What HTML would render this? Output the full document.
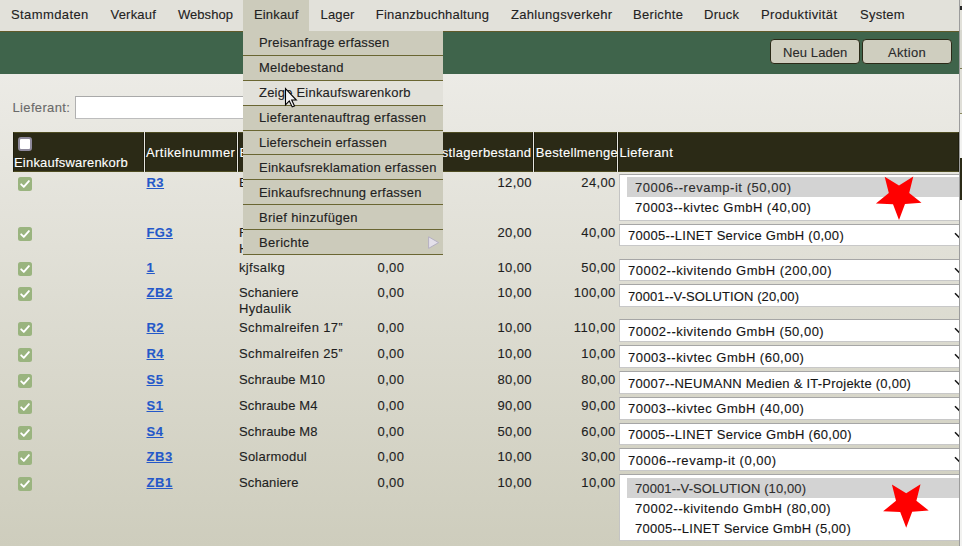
<!DOCTYPE html>
<html><head><meta charset="utf-8"><style>
html,body{margin:0;padding:0;}
body{width:962px;height:546px;overflow:hidden;position:relative;background:#e2e1da;font-family:"Liberation Sans",sans-serif;font-size:13px;}
body>div{position:absolute;}
body>div>svg{display:block;}
.t{position:absolute;white-space:nowrap;line-height:15px;font-size:13px;-webkit-text-stroke:0.12px currentColor;}
</style></head><body>
<div style="left:0px;top:74px;width:959px;height:472px;background:linear-gradient(#ecebe6,#cecdbd);"></div>
<div style="left:0px;top:0px;width:959px;height:31px;background:#e2e1da;"></div>
<div style="left:0px;top:31px;width:959px;height:1px;background:#605b2b;"></div>
<div style="left:0px;top:32px;width:959px;height:42px;background:#3f644b;"></div>
<div style="left:243px;top:0px;width:66px;height:31px;background:#cccbbb;"></div>
<span class="t" style="top:7.00px;color:#222222;letter-spacing:0.403px;left:11.00px;">Stammdaten</span>
<span class="t" style="top:7.00px;color:#222222;letter-spacing:0.205px;left:110.50px;">Verkauf</span>
<span class="t" style="top:7.00px;color:#222222;letter-spacing:0.042px;left:178.00px;">Webshop</span>
<span class="t" style="top:7.00px;color:#222222;letter-spacing:0.154px;left:254.00px;">Einkauf</span>
<span class="t" style="top:7.00px;color:#222222;letter-spacing:0.147px;left:320.50px;">Lager</span>
<span class="t" style="top:7.00px;color:#222222;letter-spacing:0.212px;left:375.75px;">Finanzbuchhaltung</span>
<span class="t" style="top:7.00px;color:#222222;letter-spacing:0.310px;left:511.00px;">Zahlungsverkehr</span>
<span class="t" style="top:7.00px;color:#222222;letter-spacing:0.311px;left:633.00px;">Berichte</span>
<span class="t" style="top:7.00px;color:#222222;letter-spacing:0.275px;left:704.00px;">Druck</span>
<span class="t" style="top:7.00px;color:#222222;letter-spacing:0.379px;left:761.00px;">Produktivität</span>
<span class="t" style="top:7.00px;color:#222222;letter-spacing:0.237px;left:860.00px;">System</span>
<div style="left:770px;top:39px;width:90px;height:25px;background:#cfcebf;border:1px solid #2b2a18;border-radius:4px;box-sizing:border-box;"></div>
<span class="t" style="top:45.20px;color:#2a2a2a;letter-spacing:0.092px;left:783.00px;">Neu Laden</span>
<div style="left:862px;top:39px;width:90px;height:25px;background:#cfcebf;border:1px solid #2b2a18;border-radius:4px;box-sizing:border-box;"></div>
<span class="t" style="top:45.20px;color:#2a2a2a;letter-spacing:0.333px;left:888.00px;">Aktion</span>
<span class="t" style="top:100.20px;color:#6a6a6a;letter-spacing:0.345px;left:12.50px;">Lieferant:</span>
<div style="left:75px;top:96px;width:300px;height:23px;background:#fff;border:1px solid #bdbdbd;border-top-color:#a9a9a9;border-left-color:#b0b0b0;box-sizing:border-box;"></div>
<div style="left:13px;top:132px;width:131px;height:40px;background:#2b2a16;border-top:1px solid #4e4c22;border-bottom:1px solid #4e4c22;border-left:1px solid #1f1e0e;border-right:1px solid #1f1e0e;box-sizing:border-box;"></div>
<div style="left:145px;top:132px;width:92px;height:40px;background:#2b2a16;border-top:1px solid #4e4c22;border-bottom:1px solid #4e4c22;border-left:1px solid #1f1e0e;border-right:1px solid #1f1e0e;box-sizing:border-box;"></div>
<div style="left:238px;top:132px;width:112px;height:40px;background:#2b2a16;border-top:1px solid #4e4c22;border-bottom:1px solid #4e4c22;border-left:1px solid #1f1e0e;border-right:1px solid #1f1e0e;box-sizing:border-box;"></div>
<div style="left:351px;top:132px;width:53px;height:40px;background:#2b2a16;border-top:1px solid #4e4c22;border-bottom:1px solid #4e4c22;border-left:1px solid #1f1e0e;border-right:1px solid #1f1e0e;box-sizing:border-box;"></div>
<div style="left:405px;top:132px;width:128px;height:40px;background:#2b2a16;border-top:1px solid #4e4c22;border-bottom:1px solid #4e4c22;border-left:1px solid #1f1e0e;border-right:1px solid #1f1e0e;box-sizing:border-box;"></div>
<div style="left:534px;top:132px;width:83px;height:40px;background:#2b2a16;border-top:1px solid #4e4c22;border-bottom:1px solid #4e4c22;border-left:1px solid #1f1e0e;border-right:1px solid #1f1e0e;box-sizing:border-box;"></div>
<div style="left:618px;top:132px;width:341px;height:40px;background:#2b2a16;border-top:1px solid #4e4c22;border-bottom:1px solid #4e4c22;border-left:1px solid #1f1e0e;border-right:1px solid #1f1e0e;box-sizing:border-box;"></div>
<div style="left:18px;top:137px;width:14px;height:14px;background:#fff;border:2px solid #8e8a9c;border-radius:3px;box-sizing:border-box;"></div>
<span class="t" style="top:154.50px;color:#ffffff;letter-spacing:0.199px;left:14.00px;">Einkaufswarenkorb</span>
<span class="t" style="top:144.70px;color:#ffffff;letter-spacing:0.425px;left:146.00px;">Artikelnummer</span>
<span class="t" style="top:144.70px;color:#ffffff;letter-spacing:0.201px;left:239.50px;">Beschreibung</span>
<span class="t" style="top:144.70px;color:#ffffff;letter-spacing:0.302px;left:404.83px;">Mindestlagerbestand</span>
<span class="t" style="top:144.70px;color:#ffffff;letter-spacing:0.294px;left:535.80px;">Bestellmenge</span>
<span class="t" style="top:144.70px;color:#ffffff;letter-spacing:0.335px;left:619.50px;">Lieferant</span>
<div style="left:18px;top:177px;width:14px;height:14px"><svg width="14" height="14" viewBox="0 0 14 14"><rect x="0" y="0" width="14" height="14" rx="2.5" fill="#9ab47f"/><path d="M3.2 7.3 L5.8 9.9 L10.9 4.1" fill="none" stroke="#fff" stroke-width="1.9" stroke-linecap="round" stroke-linejoin="round"/></svg></div>
<span class="t" style="top:174.50px;color:#2458c9;letter-spacing:0.477px;font-weight:bold;left:146.50px;text-decoration:underline;">R3</span>
<span class="t" style="top:174.50px;color:#1e1e1e;letter-spacing:-0.438px;left:239.00px;">B</span>
<span class="t" style="top:174.50px;color:#1e1e1e;letter-spacing:0.366px;left:497.52px;">12,00</span>
<span class="t" style="top:174.50px;color:#1e1e1e;letter-spacing:0.366px;left:581.33px;">24,00</span>
<div style="left:619px;top:174px;width:345px;height:47px;background:#fff;border-top:1px solid #a6a6a6;border-left:1px solid #c4c4c4;border-bottom:1px solid #c8c8c8;box-sizing:border-box;"></div>
<div style="left:627px;top:177px;width:340px;height:20px;background:#d3d3d3;"></div>
<span class="t" style="top:179.80px;color:#2e2e2e;letter-spacing:0.532px;left:635.00px;">70006--revamp-it (50,00)</span>
<span class="t" style="top:199.80px;color:#141414;letter-spacing:0.476px;left:635.00px;">70003--kivtec GmbH (40,00)</span>
<div style="left:18px;top:227px;width:14px;height:14px"><svg width="14" height="14" viewBox="0 0 14 14"><rect x="0" y="0" width="14" height="14" rx="2.5" fill="#9ab47f"/><path d="M3.2 7.3 L5.8 9.9 L10.9 4.1" fill="none" stroke="#fff" stroke-width="1.9" stroke-linecap="round" stroke-linejoin="round"/></svg></div>
<span class="t" style="top:224.50px;color:#2458c9;letter-spacing:0.370px;font-weight:bold;left:146.50px;text-decoration:underline;">FG3</span>
<span class="t" style="top:224.50px;color:#1e1e1e;letter-spacing:-1.031px;left:239.00px;">F</span>
<span class="t" style="top:240.50px;color:#1e1e1e;letter-spacing:-0.359px;left:239.00px;">H</span>
<span class="t" style="top:224.50px;color:#1e1e1e;letter-spacing:0.366px;left:497.52px;">20,00</span>
<span class="t" style="top:224.50px;color:#1e1e1e;letter-spacing:0.366px;left:581.33px;">40,00</span>
<div style="left:619px;top:224px;width:345px;height:22px;background:#fff;border-top:1px solid #a6a6a6;border-left:1px solid #c4c4c4;border-bottom:1px solid #c8c8c8;box-sizing:border-box;"></div>
<span class="t" style="top:228.30px;color:#141414;letter-spacing:0.277px;left:628.00px;">70005--LINET Service GmbH (0,00)</span>
<svg style="position:absolute;left:950px;top:224px" width="10" height="20"><path d="M5 9.3 L9.5 13.8" fill="none" stroke="#111" stroke-width="1.5"/></svg>
<div style="left:18px;top:262px;width:14px;height:14px"><svg width="14" height="14" viewBox="0 0 14 14"><rect x="0" y="0" width="14" height="14" rx="2.5" fill="#9ab47f"/><path d="M3.2 7.3 L5.8 9.9 L10.9 4.1" fill="none" stroke="#fff" stroke-width="1.9" stroke-linecap="round" stroke-linejoin="round"/></svg></div>
<span class="t" style="top:259.50px;color:#2458c9;letter-spacing:1.109px;font-weight:bold;left:146.50px;text-decoration:underline;">1</span>
<span class="t" style="top:259.50px;color:#1e1e1e;letter-spacing:0.332px;left:239.00px;">kjfsalkg</span>
<span class="t" style="top:259.50px;color:#1e1e1e;letter-spacing:0.355px;left:377.57px;">0,00</span>
<span class="t" style="top:259.50px;color:#1e1e1e;letter-spacing:0.366px;left:497.52px;">10,00</span>
<span class="t" style="top:259.50px;color:#1e1e1e;letter-spacing:0.366px;left:581.33px;">50,00</span>
<div style="left:619px;top:259px;width:345px;height:22px;background:#fff;border-top:1px solid #a6a6a6;border-left:1px solid #c4c4c4;border-bottom:1px solid #c8c8c8;box-sizing:border-box;"></div>
<span class="t" style="top:263.30px;color:#141414;letter-spacing:0.490px;left:628.00px;">70002--kivitendo GmbH (200,00)</span>
<svg style="position:absolute;left:950px;top:259px" width="10" height="20"><path d="M5 9.3 L9.5 13.8" fill="none" stroke="#111" stroke-width="1.5"/></svg>
<div style="left:18px;top:287px;width:14px;height:14px"><svg width="14" height="14" viewBox="0 0 14 14"><rect x="0" y="0" width="14" height="14" rx="2.5" fill="#9ab47f"/><path d="M3.2 7.3 L5.8 9.9 L10.9 4.1" fill="none" stroke="#fff" stroke-width="1.9" stroke-linecap="round" stroke-linejoin="round"/></svg></div>
<span class="t" style="top:284.50px;color:#2458c9;letter-spacing:0.542px;font-weight:bold;left:146.50px;text-decoration:underline;">ZB2</span>
<span class="t" style="top:284.50px;color:#1e1e1e;letter-spacing:0.113px;left:239.00px;">Schaniere</span>
<span class="t" style="top:300.50px;color:#1e1e1e;letter-spacing:0.309px;left:239.00px;">Hydaulik</span>
<span class="t" style="top:284.50px;color:#1e1e1e;letter-spacing:0.355px;left:377.57px;">0,00</span>
<span class="t" style="top:284.50px;color:#1e1e1e;letter-spacing:0.366px;left:497.52px;">10,00</span>
<span class="t" style="top:284.50px;color:#1e1e1e;letter-spacing:0.372px;left:573.68px;">100,00</span>
<div style="left:619px;top:284px;width:345px;height:23px;background:#fff;border-top:1px solid #a6a6a6;border-left:1px solid #c4c4c4;border-bottom:1px solid #c8c8c8;box-sizing:border-box;"></div>
<span class="t" style="top:289.10px;color:#141414;letter-spacing:0.111px;left:628.00px;">70001--V-SOLUTION (20,00)</span>
<svg style="position:absolute;left:950px;top:284px" width="10" height="20"><path d="M5 9.3 L9.5 13.8" fill="none" stroke="#111" stroke-width="1.5"/></svg>
<div style="left:18px;top:322px;width:14px;height:14px"><svg width="14" height="14" viewBox="0 0 14 14"><rect x="0" y="0" width="14" height="14" rx="2.5" fill="#9ab47f"/><path d="M3.2 7.3 L5.8 9.9 L10.9 4.1" fill="none" stroke="#fff" stroke-width="1.9" stroke-linecap="round" stroke-linejoin="round"/></svg></div>
<span class="t" style="top:319.50px;color:#2458c9;letter-spacing:0.477px;font-weight:bold;left:146.50px;text-decoration:underline;">R2</span>
<span class="t" style="top:319.50px;color:#1e1e1e;letter-spacing:0.364px;left:239.00px;">Schmalreifen 17‟</span>
<span class="t" style="top:319.50px;color:#1e1e1e;letter-spacing:0.355px;left:377.57px;">0,00</span>
<span class="t" style="top:319.50px;color:#1e1e1e;letter-spacing:0.366px;left:497.52px;">10,00</span>
<span class="t" style="top:319.50px;color:#1e1e1e;letter-spacing:0.534px;left:573.68px;">110,00</span>
<div style="left:619px;top:319px;width:345px;height:23px;background:#fff;border-top:1px solid #a6a6a6;border-left:1px solid #c4c4c4;border-bottom:1px solid #c8c8c8;box-sizing:border-box;"></div>
<span class="t" style="top:324.10px;color:#141414;letter-spacing:0.486px;left:628.00px;">70002--kivitendo GmbH (50,00)</span>
<svg style="position:absolute;left:950px;top:319px" width="10" height="20"><path d="M5 9.3 L9.5 13.8" fill="none" stroke="#111" stroke-width="1.5"/></svg>
<div style="left:18px;top:348px;width:14px;height:14px"><svg width="14" height="14" viewBox="0 0 14 14"><rect x="0" y="0" width="14" height="14" rx="2.5" fill="#9ab47f"/><path d="M3.2 7.3 L5.8 9.9 L10.9 4.1" fill="none" stroke="#fff" stroke-width="1.9" stroke-linecap="round" stroke-linejoin="round"/></svg></div>
<span class="t" style="top:345.50px;color:#2458c9;letter-spacing:0.477px;font-weight:bold;left:146.50px;text-decoration:underline;">R4</span>
<span class="t" style="top:345.50px;color:#1e1e1e;letter-spacing:0.364px;left:239.00px;">Schmalreifen 25‟</span>
<span class="t" style="top:345.50px;color:#1e1e1e;letter-spacing:0.355px;left:377.57px;">0,00</span>
<span class="t" style="top:345.50px;color:#1e1e1e;letter-spacing:0.366px;left:497.52px;">10,00</span>
<span class="t" style="top:345.50px;color:#1e1e1e;letter-spacing:0.366px;left:581.33px;">10,00</span>
<div style="left:619px;top:345px;width:345px;height:23px;background:#fff;border-top:1px solid #a6a6a6;border-left:1px solid #c4c4c4;border-bottom:1px solid #c8c8c8;box-sizing:border-box;"></div>
<span class="t" style="top:350.10px;color:#141414;letter-spacing:0.476px;left:628.00px;">70003--kivtec GmbH (60,00)</span>
<svg style="position:absolute;left:950px;top:345px" width="10" height="20"><path d="M5 9.3 L9.5 13.8" fill="none" stroke="#111" stroke-width="1.5"/></svg>
<div style="left:18px;top:374px;width:14px;height:14px"><svg width="14" height="14" viewBox="0 0 14 14"><rect x="0" y="0" width="14" height="14" rx="2.5" fill="#9ab47f"/><path d="M3.2 7.3 L5.8 9.9 L10.9 4.1" fill="none" stroke="#fff" stroke-width="1.9" stroke-linecap="round" stroke-linejoin="round"/></svg></div>
<span class="t" style="top:371.50px;color:#2458c9;letter-spacing:0.539px;font-weight:bold;left:146.50px;text-decoration:underline;">S5</span>
<span class="t" style="top:371.50px;color:#1e1e1e;letter-spacing:0.135px;left:239.00px;">Schraube M10</span>
<span class="t" style="top:371.50px;color:#1e1e1e;letter-spacing:0.355px;left:377.57px;">0,00</span>
<span class="t" style="top:371.50px;color:#1e1e1e;letter-spacing:0.366px;left:497.52px;">80,00</span>
<span class="t" style="top:371.50px;color:#1e1e1e;letter-spacing:0.366px;left:581.33px;">80,00</span>
<div style="left:619px;top:371px;width:345px;height:23px;background:#fff;border-top:1px solid #a6a6a6;border-left:1px solid #c4c4c4;border-bottom:1px solid #c8c8c8;box-sizing:border-box;"></div>
<span class="t" style="top:376.10px;color:#141414;letter-spacing:0.240px;left:628.00px;">70007--NEUMANN Medien &amp; IT-Projekte (0,00)</span>
<svg style="position:absolute;left:950px;top:371px" width="10" height="20"><path d="M5 9.3 L9.5 13.8" fill="none" stroke="#111" stroke-width="1.5"/></svg>
<div style="left:18px;top:400px;width:14px;height:14px"><svg width="14" height="14" viewBox="0 0 14 14"><rect x="0" y="0" width="14" height="14" rx="2.5" fill="#9ab47f"/><path d="M3.2 7.3 L5.8 9.9 L10.9 4.1" fill="none" stroke="#fff" stroke-width="1.9" stroke-linecap="round" stroke-linejoin="round"/></svg></div>
<span class="t" style="top:397.50px;color:#2458c9;letter-spacing:0.539px;font-weight:bold;left:146.50px;text-decoration:underline;">S1</span>
<span class="t" style="top:397.50px;color:#1e1e1e;letter-spacing:0.111px;left:239.00px;">Schraube M4</span>
<span class="t" style="top:397.50px;color:#1e1e1e;letter-spacing:0.355px;left:377.57px;">0,00</span>
<span class="t" style="top:397.50px;color:#1e1e1e;letter-spacing:0.366px;left:497.52px;">90,00</span>
<span class="t" style="top:397.50px;color:#1e1e1e;letter-spacing:0.366px;left:581.33px;">90,00</span>
<div style="left:619px;top:397px;width:345px;height:23px;background:#fff;border-top:1px solid #a6a6a6;border-left:1px solid #c4c4c4;border-bottom:1px solid #c8c8c8;box-sizing:border-box;"></div>
<span class="t" style="top:401.30px;color:#141414;letter-spacing:0.476px;left:628.00px;">70003--kivtec GmbH (40,00)</span>
<svg style="position:absolute;left:950px;top:397px" width="10" height="20"><path d="M5 9.3 L9.5 13.8" fill="none" stroke="#111" stroke-width="1.5"/></svg>
<div style="left:18px;top:426px;width:14px;height:14px"><svg width="14" height="14" viewBox="0 0 14 14"><rect x="0" y="0" width="14" height="14" rx="2.5" fill="#9ab47f"/><path d="M3.2 7.3 L5.8 9.9 L10.9 4.1" fill="none" stroke="#fff" stroke-width="1.9" stroke-linecap="round" stroke-linejoin="round"/></svg></div>
<span class="t" style="top:423.50px;color:#2458c9;letter-spacing:0.539px;font-weight:bold;left:146.50px;text-decoration:underline;">S4</span>
<span class="t" style="top:423.50px;color:#1e1e1e;letter-spacing:0.111px;left:239.00px;">Schraube M8</span>
<span class="t" style="top:423.50px;color:#1e1e1e;letter-spacing:0.355px;left:377.57px;">0,00</span>
<span class="t" style="top:423.50px;color:#1e1e1e;letter-spacing:0.366px;left:497.52px;">50,00</span>
<span class="t" style="top:423.50px;color:#1e1e1e;letter-spacing:0.366px;left:581.33px;">60,00</span>
<div style="left:619px;top:423px;width:345px;height:22px;background:#fff;border-top:1px solid #a6a6a6;border-left:1px solid #c4c4c4;border-bottom:1px solid #c8c8c8;box-sizing:border-box;"></div>
<span class="t" style="top:427.30px;color:#141414;letter-spacing:0.287px;left:628.00px;">70005--LINET Service GmbH (60,00)</span>
<svg style="position:absolute;left:950px;top:423px" width="10" height="20"><path d="M5 9.3 L9.5 13.8" fill="none" stroke="#111" stroke-width="1.5"/></svg>
<div style="left:18px;top:451px;width:14px;height:14px"><svg width="14" height="14" viewBox="0 0 14 14"><rect x="0" y="0" width="14" height="14" rx="2.5" fill="#9ab47f"/><path d="M3.2 7.3 L5.8 9.9 L10.9 4.1" fill="none" stroke="#fff" stroke-width="1.9" stroke-linecap="round" stroke-linejoin="round"/></svg></div>
<span class="t" style="top:448.50px;color:#2458c9;letter-spacing:0.542px;font-weight:bold;left:146.50px;text-decoration:underline;">ZB3</span>
<span class="t" style="top:448.50px;color:#1e1e1e;letter-spacing:0.220px;left:239.00px;">Solarmodul</span>
<span class="t" style="top:448.50px;color:#1e1e1e;letter-spacing:0.355px;left:377.57px;">0,00</span>
<span class="t" style="top:448.50px;color:#1e1e1e;letter-spacing:0.366px;left:497.52px;">10,00</span>
<span class="t" style="top:448.50px;color:#1e1e1e;letter-spacing:0.366px;left:581.33px;">30,00</span>
<div style="left:619px;top:448px;width:345px;height:23px;background:#fff;border-top:1px solid #a6a6a6;border-left:1px solid #c4c4c4;border-bottom:1px solid #c8c8c8;box-sizing:border-box;"></div>
<span class="t" style="top:453.10px;color:#141414;letter-spacing:0.529px;left:628.00px;">70006--revamp-it (0,00)</span>
<svg style="position:absolute;left:950px;top:448px" width="10" height="20"><path d="M5 9.3 L9.5 13.8" fill="none" stroke="#111" stroke-width="1.5"/></svg>
<div style="left:18px;top:477px;width:14px;height:14px"><svg width="14" height="14" viewBox="0 0 14 14"><rect x="0" y="0" width="14" height="14" rx="2.5" fill="#9ab47f"/><path d="M3.2 7.3 L5.8 9.9 L10.9 4.1" fill="none" stroke="#fff" stroke-width="1.9" stroke-linecap="round" stroke-linejoin="round"/></svg></div>
<span class="t" style="top:474.50px;color:#2458c9;letter-spacing:0.542px;font-weight:bold;left:146.50px;text-decoration:underline;">ZB1</span>
<span class="t" style="top:474.50px;color:#1e1e1e;letter-spacing:0.113px;left:239.00px;">Schaniere</span>
<span class="t" style="top:474.50px;color:#1e1e1e;letter-spacing:0.355px;left:377.57px;">0,00</span>
<span class="t" style="top:474.50px;color:#1e1e1e;letter-spacing:0.366px;left:497.52px;">10,00</span>
<span class="t" style="top:474.50px;color:#1e1e1e;letter-spacing:0.366px;left:581.33px;">10,00</span>
<div style="left:619px;top:474px;width:345px;height:67px;background:#fff;border-top:1px solid #a6a6a6;border-left:1px solid #c4c4c4;border-bottom:1px solid #c8c8c8;box-sizing:border-box;"></div>
<div style="left:627px;top:478px;width:340px;height:20px;background:#d3d3d3;"></div>
<span class="t" style="top:480.80px;color:#2e2e2e;letter-spacing:0.111px;left:635.00px;">70001--V-SOLUTION (10,00)</span>
<span class="t" style="top:500.80px;color:#141414;letter-spacing:0.486px;left:635.00px;">70002--kivitendo GmbH (80,00)</span>
<span class="t" style="top:520.80px;color:#141414;letter-spacing:0.277px;left:635.00px;">70005--LINET Service GmbH (5,00)</span>
<div style="left:243px;top:31px;width:200px;height:224px;background:#cccbbb;"></div>
<div style="left:243px;top:55px;width:200px;height:1px;background:#6a6632;"></div>
<span class="t" style="top:35.00px;color:#222222;letter-spacing:0.151px;left:259.00px;">Preisanfrage erfassen</span>
<div style="left:243px;top:80px;width:200px;height:1px;background:#6a6632;"></div>
<span class="t" style="top:60.00px;color:#222222;letter-spacing:0.246px;left:259.00px;">Meldebestand</span>
<div style="left:243px;top:81px;width:200px;height:24px;background:#e2e1da;"></div>
<div style="left:243px;top:105px;width:200px;height:1px;background:#6a6632;"></div>
<span class="t" style="top:85.00px;color:#222222;letter-spacing:0.218px;left:259.00px;">Zeige Einkaufswarenkorb</span>
<div style="left:243px;top:130px;width:200px;height:1px;background:#6a6632;"></div>
<span class="t" style="top:110.00px;color:#222222;letter-spacing:0.311px;left:259.00px;">Lieferantenauftrag erfassen</span>
<div style="left:243px;top:154px;width:200px;height:1px;background:#6a6632;"></div>
<span class="t" style="top:135.00px;color:#222222;letter-spacing:0.207px;left:259.00px;">Lieferschein erfassen</span>
<div style="left:243px;top:179px;width:200px;height:1px;background:#6a6632;"></div>
<span class="t" style="top:160.00px;color:#222222;letter-spacing:0.253px;left:259.00px;">Einkaufsreklamation erfassen</span>
<div style="left:243px;top:204px;width:200px;height:1px;background:#6a6632;"></div>
<span class="t" style="top:185.00px;color:#222222;letter-spacing:0.202px;left:259.00px;">Einkaufsrechnung erfassen</span>
<div style="left:243px;top:229px;width:200px;height:1px;background:#6a6632;"></div>
<span class="t" style="top:210.00px;color:#222222;letter-spacing:0.303px;left:259.00px;">Brief hinzufügen</span>
<div style="left:243px;top:254px;width:200px;height:1px;background:#6a6632;"></div>
<span class="t" style="top:235.00px;color:#222222;letter-spacing:0.311px;left:259.00px;">Berichte</span>
<svg style="position:absolute;left:427px;top:235px" width="14" height="16"><path d="M1.6 1.8 L11.6 7.6 L1.6 13.4 Z" fill="#e4e0ea" stroke="#b5b0c2" stroke-width="1"/></svg>
<div style="left:959px;top:0px;width:1px;height:546px;background:#9c9c9c;"></div>
<div style="left:960px;top:0px;width:2px;height:546px;background:#f2f2f0;"></div>
<div style="left:960px;top:0px;width:2px;height:6px;background:#e2e1da;"></div>
<div style="left:960px;top:6px;width:2px;height:4px;background:#2a2a2a;"></div>
<div style="left:960px;top:10px;width:2px;height:20px;background:#e2e1da;"></div>
<div style="left:960px;top:30px;width:2px;height:38px;background:#d8d8d0;"></div>
<div style="left:960px;top:68px;width:2px;height:1px;background:#7a7a50;"></div>
<div style="left:960px;top:69px;width:2px;height:44px;background:#e0dfd8;"></div>
<div style="left:960px;top:113px;width:2px;height:1px;background:#8a8a60;"></div>
<div style="left:960px;top:158px;width:2px;height:42px;background:#2b2a16;"></div>
<svg style="position:absolute;left:0;top:0" width="962" height="546"><polygon points="884.7,176.8 899.0,185.4 913.3,176.4 909.2,193.0 921.5,202.7 905.0,204.0 899.0,220.0 893.0,204.3 875.9,203.5 888.8,193.0" fill="#ff0000"/><polygon points="891.9,484.6 906.2,493.2 920.5,484.2 916.4,500.8 928.7,510.5 912.2,511.8 906.2,527.8 900.2,512.1 883.1,511.3 896.0,500.8" fill="#ff0000"/><path d="M285.5 88.6 L285.5 104.8 L289.3 100.9 L292.2 106.9 L294.5 105.9 L291.7 100 L296.3 100 Z" fill="#f4f4f4" stroke="#000" stroke-width="1.1" stroke-linejoin="miter"/></svg>
</body></html>
